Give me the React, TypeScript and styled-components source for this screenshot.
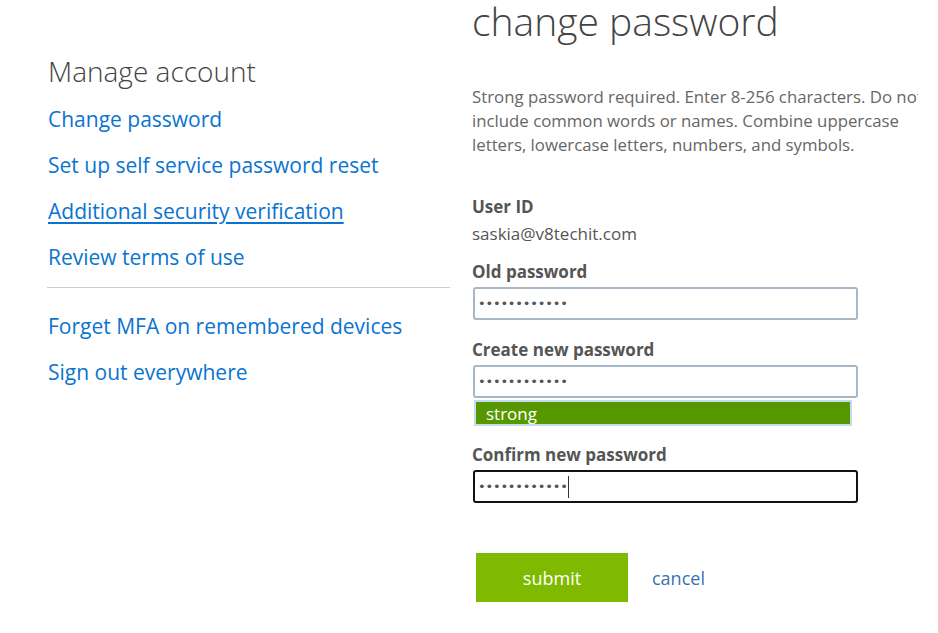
import React from 'react';
import styled, { createGlobalStyle } from 'styled-components';

const GlobalStyle = createGlobalStyle`
  html, body {
    margin: 0;
    padding: 0;
    background: #ffffff;
    font-family: "Open Sans", "Noto Sans", sans-serif;
  }
`;

const Page = styled.div`
  width: 938px;
  height: 633px;
  display: flex;
  overflow: hidden;
`;

const Sidebar = styled.nav`
  width: 402px;
  margin-left: 48px;
  padding-top: 51px;
  display: flex;
  flex-direction: column;
`;

const SideTitle = styled.h2`
  margin: 0 0 5px 0;
  font-size: 28px;
  font-weight: 300;
  line-height: 40px;
  color: #444444;
`;

const SideLink = styled.a<{ $active?: boolean }>`
  display: block;
  font-size: 21px;
  line-height: 46px;
  color: #0a74d0;
  text-decoration: ${({ $active }) => ($active ? 'underline' : 'none')};
  text-underline-offset: 3px;
  cursor: pointer;
`;

const Divider = styled.hr`
  border: none;
  border-top: 1px solid #cccccc;
  margin: 7px 0 15px -1px;
`;

const Main = styled.main`
  width: 446px;
  margin-left: 22px;
  overflow: hidden;
`;

const Heading = styled.h1`
  margin: -2px 0 0 0;
  font-size: 39px;
  font-weight: 300;
  line-height: 46px;
  color: #444444;
  white-space: nowrap;
`;

const Description = styled.p`
  margin: 41px 0 0 0;
  width: 480px;
  font-size: 16.8px;
  line-height: 24px;
  color: #666666;
`;

const Form = styled.form`
  margin-top: 38px;
  display: flex;
  flex-direction: column;
`;

const Label = styled.label<{ $gap?: number }>`
  display: block;
  margin-top: ${({ $gap }) => $gap ?? 0}px;
  font-size: 17px;
  font-weight: 700;
  line-height: 24px;
  color: #555555;
`;

const Value = styled.div`
  margin-top: 3px;
  font-size: 17px;
  line-height: 24px;
  color: #555555;
`;

const Field = styled.div<{ $focused?: boolean }>`
  box-sizing: border-box;
  width: 385px;
  height: 33px;
  margin-top: 3px;
  margin-left: 1px;
  padding: 0 3px;
  display: flex;
  align-items: center;
  border: 2px solid ${({ $focused }) => ($focused ? '#111111' : '#a6b7c7')};
  border-radius: 3px;
  background: #ffffff;
`;

const Dots = styled.span`
  font-size: 13px;
  letter-spacing: -0.2px;
  color: #555555;
  font-family: "DejaVu Sans", sans-serif;
`;

const Caret = styled.span`
  display: inline-block;
  width: 1px;
  height: 22px;
  background: #333333;
`;

const Strength = styled.div`
  box-sizing: border-box;
  width: 378px;
  height: 26px;
  margin: 2px 0 0 2px;
  padding-left: 10px;
  display: flex;
  align-items: center;
  background: #579800;
  border: 2px solid #c4dcee;
  font-size: 17px;
  color: #ffffff;
`;

const Actions = styled.div`
  margin-top: 50px;
  margin-left: 4px;
  display: flex;
  align-items: center;
  gap: 24px;
`;

const Submit = styled.button`
  width: 152px;
  height: 49px;
  border: none;
  background: #7fba00;
  color: #ffffff;
  font-family: inherit;
  font-size: 18px;
  cursor: pointer;
`;

const Cancel = styled.a`
  font-size: 18px;
  color: #3a72ae;
  cursor: pointer;
`;

const Password = ({ count, focused }: { count: number; focused?: boolean }) => (
  <Field $focused={focused}>
    <Dots>{'•'.repeat(count)}</Dots>
    {focused && <Caret />}
  </Field>
);

export default function App() {
  return (
    <>
      <GlobalStyle />
      <Page>
        <Sidebar>
          <SideTitle>Manage account</SideTitle>
          <SideLink>Change password</SideLink>
          <SideLink>Set up self service password reset</SideLink>
          <SideLink $active>Additional security verification</SideLink>
          <SideLink>Review terms of use</SideLink>
          <Divider />
          <SideLink>Forget MFA on remembered devices</SideLink>
          <SideLink>Sign out everywhere</SideLink>
        </Sidebar>
        <Main>
          <Heading>change password</Heading>
          <Description>
            Strong password required. Enter 8-256 characters. Do not include common words or names.
            Combine uppercase letters, lowercase letters, numbers, and symbols.
          </Description>
          <Form onSubmit={(e) => e.preventDefault()}>
            <Label>User ID</Label>
            <Value>saskia@v8techit.com</Value>
            <Label $gap={14}>Old password</Label>
            <Password count={12} />
            <Label $gap={18}>Create new password</Label>
            <Password count={12} />
            <Strength>strong</Strength>
            <Label $gap={17}>Confirm new password</Label>
            <Password count={12} focused />
            <Actions>
              <Submit type="submit">submit</Submit>
              <Cancel>cancel</Cancel>
            </Actions>
          </Form>
        </Main>
      </Page>
    </>
  );
}
